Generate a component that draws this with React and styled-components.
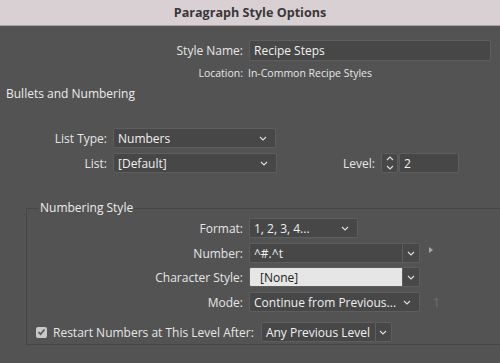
import React from 'react';
import styled, { createGlobalStyle } from 'styled-components';

const Global = createGlobalStyle`
  html, body { margin: 0; padding: 0; background: #535353; }
  body { font-family: "Open Sans", "Noto Sans", sans-serif; }
`;

const Dialog = styled.div`
  width: 500px;
  height: 363px;
  overflow: hidden;
  background: #535353;
  color: #e6e6e6;
  font-size: 12px;
`;

const TitleBar = styled.div`
  height: 25px;
  border-bottom: 1px solid #a9a2a5;
  background: #d8d0d3;
  display: flex;
  align-items: center;
  justify-content: center;
  font-weight: 700;
  font-size: 12.6px;
  color: #383838;
`;

const Body = styled.div`
  padding-top: 14px;
`;

const Row = styled.div`
  display: flex;
  align-items: center;
  height: ${(p) => p.$h || 20}px;
  margin-top: ${(p) => p.$mt || 0}px;
  padding-left: ${(p) => p.$pl || 0}px;
  font-size: ${(p) => p.$fs || 12}px;
`;

const Label = styled.div`
  width: ${(p) => p.$w}px;
  padding-right: ${(p) => p.$pr ?? 6}px;
  box-sizing: border-box;
  text-align: right;
  white-space: nowrap;
  flex-shrink: 0;
`;

const Heading = styled.div`
  margin-top: 7px;
  padding-left: 6px;
  height: 14px;
  line-height: 14px;
  color: #ececec;
`;

const Box = styled.div`
  box-sizing: border-box;
  width: ${(p) => p.$w}px;
  height: 100%;
  background: #474747;
  border: 1px solid #5e5e5e;
  border-radius: 2px;
  display: flex;
  align-items: center;
  color: #f0f0f0;
  flex-shrink: 0;
`;

const SelectBox = styled(Box)`
  justify-content: space-between;
  padding: 0 8px 0 4px;
`;

const FieldBox = styled(Box)`
  padding-left: 4px;
`;

const Combo = styled(Box)`
  overflow: hidden;
`;

const ComboField = styled.div`
  flex: 1;
  height: 100%;
  display: flex;
  align-items: center;
  padding-left: ${(p) => (p.$light ? 10 : 4)}px;
  background: ${(p) => (p.$light ? '#e6e6e6' : 'transparent')};
  color: ${(p) => (p.$light ? '#222' : '#f0f0f0')};
`;

const ComboButton = styled.div`
  width: ${(p) => p.$w || 16}px;
  height: 100%;
  border-left: 1px solid #5e5e5e;
  background: #484848;
  display: flex;
  align-items: center;
  justify-content: center;
`;

const Spinner = styled(Box)`
  flex-direction: column;
  justify-content: center;
  gap: 4px;
  margin-right: 1px;
`;

const Group = styled.fieldset`
  margin: 28px 0 0 26px;
  padding: 3px 0 2px 0;
  border: 1px solid #464646;
  border-right: none;
  min-width: 0;
`;

const Legend = styled.legend`
  margin-left: 12px;
  padding: 0 1px;
  line-height: 14px;
  font-size: 12px;
  color: #ececec;
`;

const Check = styled.div`
  width: 11px;
  height: 11px;
  border-radius: 2px;
  background: #c9c9c9;
  display: flex;
  align-items: center;
  justify-content: center;
  margin-right: 6px;
  flex-shrink: 0;
`;

const CheckLabel = styled.div`
  margin-right: 7px;
  white-space: nowrap;
`;

const Muted = styled.div`
  margin-left: ${(p) => p.$ml}px;
  color: #727272;
`;

const Chevron = ({ up }) => (
  <svg width="8" height="5" viewBox="0 0 8 5">
    <polyline
      points={up ? '1,4 4,1 7,4' : '1,1 4,4 7,1'}
      fill="none"
      stroke="#dcdcdc"
      strokeWidth="1.2"
    />
  </svg>
);

const Triangle = styled.div`
  margin-left: 9px;
  width: 0;
  height: 0;
  border-top: 3.5px solid transparent;
  border-bottom: 3.5px solid transparent;
  border-left: 4px solid #a8a8a8;
  margin-top: -6px;
`;

const Select = ({ w, children }) => (
  <SelectBox $w={w}>
    <span>{children}</span>
    <Chevron />
  </SelectBox>
);

export default function App() {
  return (
    <>
      <Global />
      <Dialog>
        <TitleBar>Paragraph Style Options</TitleBar>
        <Body>
          <Row $h={21}>
            <Label $w={249}>Style Name:</Label>
            <FieldBox $w={242}>Recipe Steps</FieldBox>
          </Row>
          <Row $h={14} $mt={5} $fs={10.5}>
            <Label $w={248} $pr={5}>Location:</Label>
            <span>In-Common Recipe Styles</span>
          </Row>
          <Heading>Bullets and Numbering</Heading>
          <Row $mt={27}>
            <Label $w={113}>List Type:</Label>
            <Select w={163}>Numbers</Select>
          </Row>
          <Row $mt={5}>
            <Label $w={113}>List:</Label>
            <Select w={164}>[Default]</Select>
            <Label $w={104}>Level:</Label>
            <Spinner $w={17}>
              <Chevron up />
              <Chevron />
            </Spinner>
            <FieldBox $w={60}>2</FieldBox>
          </Row>
          <Group>
            <Legend>Numbering Style</Legend>
            <Row>
              <Label $w={222}>Format:</Label>
              <Select w={109}>1, 2, 3, 4...</Select>
            </Row>
            <Row $mt={5}>
              <Label $w={222}>Number:</Label>
              <Combo $w={171}>
                <ComboField>^#.^t</ComboField>
                <ComboButton>
                  <Chevron />
                </ComboButton>
              </Combo>
              <Triangle />
            </Row>
            <Row $mt={4}>
              <Label $w={222}>Character Style:</Label>
              <Combo $w={171}>
                <ComboField $light>[None]</ComboField>
                <ComboButton>
                  <Chevron />
                </ComboButton>
              </Combo>
            </Row>
            <Row $mt={5}>
              <Label $w={222}>Mode:</Label>
              <Select w={171}>Continue from Previous...</Select>
              <Muted $ml={13}>1</Muted>
            </Row>
            <Row $mt={10} $pl={9}>
              <Check>
                <svg width="9" height="8" viewBox="0 0 9 8">
                  <polyline points="1.5,4 3.5,6.2 7.5,1.5" fill="none" stroke="#555" strokeWidth="1.6" />
                </svg>
              </Check>
              <CheckLabel>Restart Numbers at This Level After:</CheckLabel>
              <Combo $w={131}>
                <ComboField>Any Previous Level</ComboField>
                <ComboButton $w={15}>
                  <Chevron />
                </ComboButton>
              </Combo>
            </Row>
          </Group>
        </Body>
      </Dialog>
    </>
  );
}
